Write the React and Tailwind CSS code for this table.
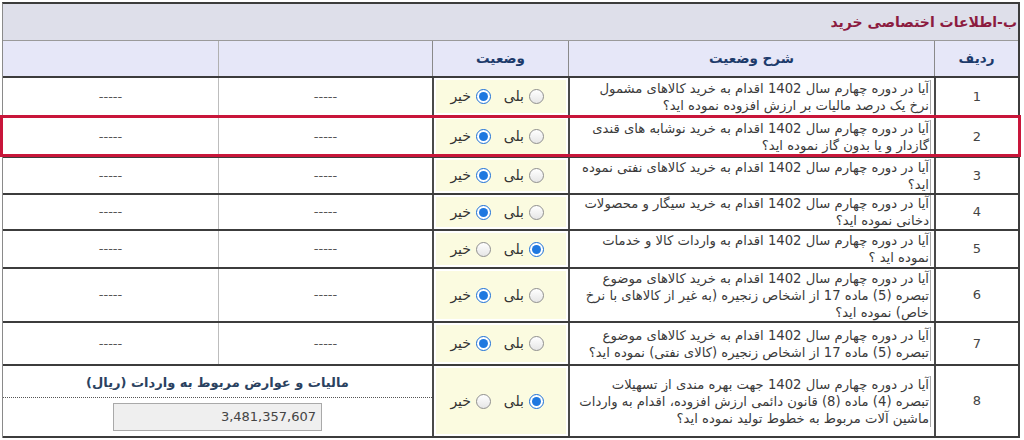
import React from 'react';

const rows = [
  { n: 1, h: 'h-[39px]', yes: false, lines: ['آیا در دوره چهارم سال 1402 اقدام به خرید کالاهای مشمول', 'نرخ یک درصد مالیات بر ارزش افزوده نموده اید؟'] },
  { n: 2, h: 'h-[41px]', yes: false, mark: true, lines: ['آیا در دوره چهارم سال 1402 اقدام به خرید نوشابه های قندی', 'گازدار و یا بدون گاز نموده اید؟'] },
  { n: 3, h: 'h-[37px]', yes: false, lines: ['آیا در دوره چهارم سال 1402 اقدام به خرید کالاهای نفتی نموده', 'اید؟'] },
  { n: 4, h: 'h-[36px]', yes: false, lines: ['آیا در دوره چهارم سال 1402 اقدام به خرید سیگار و محصولات', 'دخانی نموده اید؟'] },
  { n: 5, h: 'h-[38px]', yes: true, lines: ['آیا در دوره چهارم سال 1402 اقدام به واردات کالا و خدمات', 'نموده اید ؟'] },
  { n: 6, h: 'h-[54px]', yes: false, lines: ['آیا در دوره چهارم سال 1402 اقدام به خرید کالاهای موضوع', 'تبصره (5) ماده 17 از اشخاص زنجیره (به غیر از کالاهای با نرخ', 'خاص) نموده اید؟'] },
  { n: 7, h: 'h-[43px]', yes: false, lines: ['آیا در دوره چهارم سال 1402 اقدام به خرید کالاهای موضوع', 'تبصره (5) ماده 17 از اشخاص زنجیره (کالای نفتی) نموده اید؟'] },
];

const lastRow = ['آیا در دوره چهارم سال 1402 جهت بهره مندی از تسهیلات', 'تبصره (4) ماده (8) قانون دائمی ارزش افزوده، اقدام به واردات', 'ماشین آلات مربوط به خطوط تولید نموده اید؟'];

function Radio({ checked }) {
  if (checked) {
    return (
      <span className="w-[15px] h-[15px] rounded-full border border-[#1b6fd6] bg-white flex items-center justify-center shrink-0">
        <span className="w-[9px] h-[9px] rounded-full bg-[#1f78e0]" />
      </span>
    );
  }
  return <span className="w-[15px] h-[15px] rounded-full border border-[#8f8f8f] bg-gradient-to-b from-white to-[#e6e6e6] shrink-0" />;
}

function Status({ yes }) {
  return (
    <div className="w-[136px] border-l-2 border-[#4a4a4a] p-[2px] flex">
      <div className="flex-1 bg-[#fbfbe0] flex items-center pr-[22px] text-[14px] text-[#333]">
        <Radio checked={yes} />
        <span className="mr-[5px] w-[33px]">بلی</span>
        <Radio checked={!yes} />
        <span className="mr-[5px]">خیر</span>
      </div>
    </div>
  );
}

function Desc({ lines }) {
  return (
    <div className="w-[366px] border-l-2 border-[#4a4a4a] flex items-center pr-[3px] overflow-hidden">
      <div className="border-r border-[#a8a8a8] pr-[1px] text-[13.2px] leading-[17px] text-[#3a3a3a] whitespace-nowrap">
        {lines.map((l, i) => <div key={i}>{l}</div>)}
      </div>
    </div>
  );
}

export default function App() {
  return (
    <div className="w-[1024px] h-[440px] bg-white pt-[2px] pl-[2px] overflow-hidden" style={{ fontFamily: '"DejaVu Sans", sans-serif' }}>
      <div dir="rtl" className="w-[1018px] border-t-2 border-r-2 border-l border-[#3c3c3c] border-l-[#8a8a8a]">
        <div className="h-[37px] bg-[#dedfea] flex items-center pr-[1px] text-[14px] font-bold text-[#8c1b40] border-b border-[#9a9a9a]">
          ب-اطلاعات اختصاصی خرید
        </div>
        <div className="h-[37px] bg-[#e6e7f8] flex border-b-2 border-[#3c3c3c] text-[13.5px] font-bold text-[#1d3b6b]">
          <div className="w-[84px] border-l border-[#8a8a8a] flex items-center justify-center">ردیف</div>
          <div className="w-[366px] border-l border-[#8a8a8a] flex items-center justify-center">شرح وضعیت</div>
          <div className="w-[136px] border-l border-[#8a8a8a] flex items-center justify-center">وضعیت</div>
          <div className="w-[214px] border-l border-[#b0b0b0]" />
          <div className="flex-1" />
        </div>

        {rows.map(r => (
          <div key={r.n} className={`relative flex border-b-2 border-[#3c3c3c] ${r.h}`}>
            <div className="w-[84px] border-l-2 border-[#4a4a4a] flex items-center justify-center text-[13px] text-[#444]">{r.n}</div>
            <Desc lines={r.lines} />
            <Status yes={r.yes} />
            <div className="w-[214px] border-l border-[#bdbdbd] flex items-center justify-center text-[13px] text-[#555]">-----</div>
            <div className="flex-1 flex items-center justify-center text-[13px] text-[#555]">-----</div>
            {r.mark && <div className="absolute -top-[2px] -bottom-[1px] -right-[3px] -left-[3px] border-[3px] border-[#c8163a]" />}
          </div>
        ))}

        <div className="flex h-[72px] border-b-2 border-[#3c3c3c]">
          <div className="w-[84px] border-l-2 border-[#4a4a4a] flex items-center justify-center text-[13px] text-[#444]">8</div>
          <Desc lines={lastRow} />
          <Status yes={true} />
          <div className="flex-1 flex flex-col">
            <div className="h-[32px] flex items-end justify-center pb-[5px] text-[13px] font-bold text-[#2b4260] border-b border-dotted border-[#555]">
              مالیات و عوارض مربوط به واردات (ریال)
            </div>
            <div className="flex-1 flex items-center justify-center">
              <div className="w-[209px] h-[28px] bg-[#efefef] border border-[#a9a9a9] flex items-center pr-[5px] text-[13px] text-[#444]">3,481,357,607</div>
            </div>
          </div>
        </div>
      </div>
    </div>
  );
}
